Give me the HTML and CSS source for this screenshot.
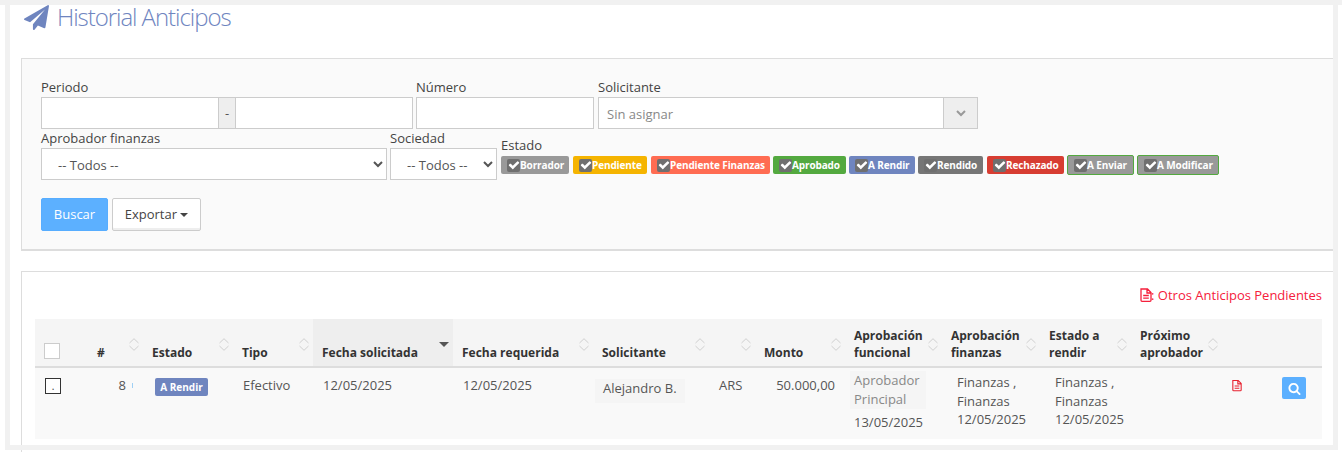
FILE: index.html
```html
<!DOCTYPE html>
<html lang="es">
<head>
<meta charset="utf-8">
<title>Historial Anticipos</title>
<link rel="stylesheet" href="styles.css">
</head>
<body>
<svg class="defs" width="0" height="0" aria-hidden="true">
  <symbol id="check" viewBox="0 0 1792 1792"><path fill="#fff" d="M1671 566q0 40-28 68l-724 724-136 136q-28 28-68 28t-68-28l-136-136-362-362q-28-28-28-68t28-68l136-136q28-28 68-28t68 28l294 295 656-657q28-28 68-28t68 28l136 136q28 28 28 68z"/></symbol>
  <symbol id="sort" viewBox="0 0 10 13"><path fill="none" stroke="#d0d0d0" d="M.5 5 5 .7 9.500 5M.5 8 5 12.300 9.500 8"/></symbol>
  <symbol id="doc" viewBox="0 0 12 14"><path fill="none" stroke="currentColor" stroke-width="1.300" d="M1 1h6.500L11 4.500V12.300a1 1 0 0 1-1 1H2a1 1 0 0 1-1-1zM7 1v4h4M3.200 7.500h5.600M3.200 10.200h5.600"/></symbol>
</svg>
<div class="topbar"></div>
<div class="page">
  <main class="inner">
    <h1 class="title">
      <svg class="plane" viewBox="0 0 1792 1792"><path fill="#6f85bf" d="M1764 11q33 24 27 64l-256 1536q-5 29-32 45-14 8-31 8-11 0-24-5l-453-185-242 295q-18 23-49 23-13 0-22-4-19-7-30.500-23.500t-11.500-36.500v-349l864-1059-1069 925-395-162q-37-14-40-55-2-40 32-59l1664-960q15-9 32-9 20 0 36 11z"/></svg>
      <span>Historial Anticipos</span>
    </h1>

    <section class="filters">
      <div class="row row-one">
        <div class="field f-periodo">
          <label>Periodo</label>
          <div class="group">
            <input class="ctl grow" type="text">
            <span class="addon">-</span>
            <input class="ctl grow" type="text">
          </div>
        </div>
        <div class="field f-numero">
          <label>Número</label>
          <input class="ctl" type="text">
        </div>
        <div class="field f-solic">
          <label>Solicitante</label>
          <div class="picker">
            <span class="picker-text">Sin asignar</span>
            <span class="picker-arrow"><svg width="10" height="7" viewBox="0 0 10 7"><path fill="none" stroke="#999" stroke-width="2" d="M1 1l4 4 4-4"/></svg></span>
          </div>
        </div>
      </div>
      <div class="row row-two">
        <div class="field f-aprob">
          <label>Aprobador finanzas</label>
          <select class="ctl sel"><option>-- Todos --</option></select>
        </div>
        <div class="field f-soc">
          <label>Sociedad</label>
          <select class="ctl sel"><option>-- Todos --</option></select>
        </div>
        <div class="field f-estado">
          <label class="lbl-estado">Estado</label>
          <div class="chips">
            <span class="chip c-borrador"><i class="box"><svg><use href="#check"/></svg></i>Borrador</span>
            <span class="chip c-pendiente"><i class="box"><svg><use href="#check"/></svg></i>Pendiente</span>
            <span class="chip c-finanzas"><i class="box"><svg><use href="#check"/></svg></i>Pendiente Finanzas</span>
            <span class="chip c-aprobado"><i class="box"><svg><use href="#check"/></svg></i>Aprobado</span>
            <span class="chip c-rendir"><i class="box"><svg><use href="#check"/></svg></i>A Rendir</span>
            <span class="chip c-rendido"><i class="box"><svg><use href="#check"/></svg></i>Rendido</span>
            <span class="chip c-rechazado"><i class="box"><svg><use href="#check"/></svg></i>Rechazado</span>
            <span class="chip c-enviar"><i class="box"><svg><use href="#check"/></svg></i>A Enviar</span>
            <span class="chip c-modificar"><i class="box"><svg><use href="#check"/></svg></i>A Modificar</span>
          </div>
        </div>
      </div>
      <div class="actions">
        <button class="btn btn-primary" type="button">Buscar</button>
        <button class="btn btn-default" type="button">Exportar <i class="caret"></i></button>
      </div>
    </section>

    <section class="results">
      <div class="toolbar">
        <a class="pending"><svg class="doc-link"><use href="#doc"/></svg>: Otros Anticipos Pendientes</a>
      </div>
      <table class="grid">
        <colgroup>
          <col class="w-check"><col class="w-num"><col class="w-estado"><col class="w-tipo"><col class="w-fecha"><col class="w-fecha"><col class="w-solic"><col class="w-mon"><col class="w-monto"><col class="w-func"><col class="w-fin"><col class="w-rend"><col class="w-prox"><col class="w-doc"><col class="w-act">
        </colgroup>
        <thead>
          <tr>
            <th><span class="head-check"></span></th>
            <th class="sortable">#<svg class="sort"><use href="#sort"/></svg></th>
            <th class="sortable">Estado<svg class="sort"><use href="#sort"/></svg></th>
            <th class="sortable">Tipo<svg class="sort"><use href="#sort"/></svg></th>
            <th class="sorted">Fecha solicitada<i class="sort-down"></i></th>
            <th class="sortable">Fecha requerida<svg class="sort"><use href="#sort"/></svg></th>
            <th class="sortable">Solicitante<svg class="sort"><use href="#sort"/></svg></th>
            <th class="sortable"><svg class="sort"><use href="#sort"/></svg></th>
            <th class="sortable">Monto<svg class="sort"><use href="#sort"/></svg></th>
            <th class="sortable">Aprobación funcional<svg class="sort"><use href="#sort"/></svg></th>
            <th class="sortable">Aprobación finanzas<svg class="sort"><use href="#sort"/></svg></th>
            <th class="sortable">Estado a rendir<svg class="sort"><use href="#sort"/></svg></th>
            <th class="sortable">Próximo aprobador<svg class="sort"><use href="#sort"/></svg></th>
            <th></th>
            <th></th>
          </tr>
        </thead>
        <tbody>
          <tr>
            <td><span class="row-check">.</span></td>
            <td class="num">8<i class="tick"></i></td>
            <td class="center"><span class="badge">A Rendir</span></td>
            <td>Efectivo</td>
            <td>12/05/2025</td>
            <td>12/05/2025</td>
            <td class="tight"><span class="person">Alejandro B.</span></td>
            <td>ARS</td>
            <td class="amount">50.000,00</td>
            <td class="func"><span class="role">Aprobador Principal</span><span class="date">13/05/2025</span></td>
            <td class="approv">Finanzas , Finanzas<br>12/05/2025</td>
            <td class="approv">Finanzas , Finanzas<br>12/05/2025</td>
            <td></td>
            <td class="doc-cell"><svg class="doc-row"><use href="#doc"/></svg></td>
            <td class="act-cell"><button class="search" type="button"><svg viewBox="0 0 1792 1792"><path fill="#fff" d="M1216 832q0-185-131.500-316.500t-316.500-131.500-316.500 131.500-131.500 316.500 131.500 316.500 316.500 131.500 316.500-131.500 131.500-316.500zm512 832q0 52-38 90t-90 38q-54 0-90-38l-343-342q-179 124-399 124-143 0-273.500-55.500t-225-150-150-225-55.500-273.500 55.500-273.500 150-225 225-150 273.500-55.500 273.500 55.500 225 150 150 225 55.500 273.500q0 220-124 399l343 343q37 37 37 90z"/></svg></button></td>
          </tr>
        </tbody>
      </table>
    </section>
  </main>
</div>
<div class="tail"></div>
</body>
</html>
```
FILE: styles.css
```css
* { box-sizing: border-box; }
html, body { margin: 0; padding: 0; background: #fff; overflow: hidden; }
body { height: 452px; font-family: "Open Sans", sans-serif; font-size: 13px; color: #555; }
.defs { display: block; height: 0; }

.topbar { height: 5px; background: #f1f1f1; }
.page { width: 1333px; margin-left: 5px; height: 445px; padding: 0 5px 5px 5px; background: #f1f1f1; }
.inner { height: 440px; background: #fff; padding-left: 11px; }
.tail { height: 2px; margin-left: 21px; width: 1px; background: #ddd; }

.title { display: flex; align-items: center; height: 53px; margin: 0; padding: 0 0 30px 3px; font-size: 24px; line-height: 23px; font-weight: 300; color: #6f85bf; letter-spacing: -1.050px; }
.plane { width: 25px; height: 25px; margin-right: 8px; margin-top: 2px; flex: none; }

.filters { height: 193px; background: #fafafa; border: 1px solid #ddd; border-right: 0; border-bottom-width: 2px; padding: 18px 0 0 19px; }
.row { display: flex; align-items: flex-end; }
.row-one { height: 52px; gap: 3px; }
.row-two { height: 51px; gap: 3px; margin-top: 0; }
.field { display: flex; flex-direction: column; }
label { font-size: 13px; line-height: 20px; color: #444; }
.ctl { height: 32px; border: 1px solid #ccc; background: #fff; font-family: inherit; font-size: 13px; color: #555; border-radius: 0; outline: 0; padding: 0 12px; width: 100%; }
.sel { padding: 2px 0 0 12px; }
.group { display: flex; }
.grow { flex: 1; width: 0; }
.addon { width: 18px; background: #eee; border: 1px solid #ccc; border-width: 1px; display: flex; align-items: center; justify-content: center; color: #555; font-size: 13px; margin: 0 -1px; position: relative; }
.f-periodo { width: 372px; }
.f-numero { width: 178px; }
.f-solic { width: 380px; margin-left: 1px; }
.picker { display: flex; height: 32px; border: 1px solid #ccc; background: #fff; }
.picker-text { flex: 1; padding-left: 8px; line-height: 32px; color: #888; }
.picker-arrow { width: 34px; background: #eee; border-left: 1px solid #ccc; display: flex; align-items: center; justify-content: center; }

.f-aprob { width: 346px; }
.f-soc { width: 107px; }
.f-soc label { line-height: 20px; }
.f-estado { margin-left: 1px; margin-bottom: 5px; }
.lbl-estado { line-height: 18px; margin-bottom: 1px; }
.chips { display: flex; gap: 3px; align-items: center; height: 20px; }
.chip { display: inline-flex; align-items: center; height: 18px; padding: 0 0 0 6px; border-radius: 2px; color: #fff; font-size: 10px; font-weight: 700; letter-spacing: -.12px; white-space: nowrap; }
.box { flex: none; width: 13px; height: 13px; margin-right: 0; background: #6f6f6f; border-radius: 2px; display: flex; align-items: center; justify-content: center; }
.box svg { width: 12px; height: 12px; display: block; flex: none; margin-left: 1px; }
.c-borrador { background: #999; width: 68px; }
.c-pendiente { background: #f5b400; width: 74px; margin-left: 1px; }
.c-finanzas { background: #ff6c52; width: 119px; margin-left: 1px; }
.c-aprobado { background: #53a93f; width: 73px; }
.c-rendir { background: #6f85bf; width: 66px; }
.c-rendido { background: #767676; width: 65px; }
.c-rechazado { background: #d73d32; width: 77px; margin-left: 1px; }
.c-enviar { background: #999; width: 67px; height: 20px; border: 1px solid #53a93f; }
.c-modificar { background: #999; width: 82px; height: 20px; border: 1px solid #53a93f; }

.actions { display: flex; gap: 4px; margin-top: 18px; }
.btn { height: 33px; font-family: inherit; font-size: 13px; border-radius: 2px; padding: 0 0 2px; }
.btn-primary { width: 67px; background: #5cb0ff; border: 1px solid #57adff; color: #fff; }
.btn-default { width: 89px; background: #fff; border: 1px solid #ccc; color: #444; box-shadow: inset 0 -2px 0 #eee; }
.caret { display: inline-block; border-top: 4px solid #444; border-left: 4px solid transparent; border-right: 4px solid transparent; vertical-align: middle; }

.results { margin-top: 20px; background: #fff; border: 1px solid #ddd; border-right: 0; border-bottom: 0; padding: 0 0 0 13px; height: 174px; }
.toolbar { height: 47px; display: flex; justify-content: flex-end; align-items: flex-start; padding: 14px 11px 0 0; }
.pending { color: #f5203c; font-size: 13px; line-height: 18px; display: flex; align-items: center; }
.doc-link { width: 12px; height: 14px; margin-right: -1px; color: #f5203c; }

.grid { border-collapse: collapse; table-layout: fixed; width: 1287px; color: #555; }
.w-check { width: 53px; } .w-num { width: 55px; } .w-estado { width: 90px; } .w-tipo { width: 80px; }
.w-fecha { width: 140px; } .w-solic { width: 116px; } .w-mon { width: 46px; } .w-monto { width: 90px; }
.w-func { width: 97px; } .w-fin { width: 98px; } .w-rend { width: 91px; } .w-prox { width: 91px; }
.w-doc { width: 50px; } .w-act { width: 50px; }

th { position: relative; height: 48px; padding: 0 9px 5px; text-align: left; vertical-align: bottom; background: #f5f5f5; border-bottom: 2px solid #ddd; font-size: 12px; line-height: 17px; font-weight: 700; color: #333; }
th.sorted { background: #eee; }
.sort { position: absolute; right: 4px; top: 19px; width: 10px; height: 13px; }
.sort-down { position: absolute; right: 4px; top: 23px; border-top: 5px solid #555; border-left: 5.500px solid transparent; border-right: 5.500px solid transparent; }
.head-check { display: block; width: 16px; height: 16px; border: 1px solid #ccc; background: #fff; margin-bottom: 2px; }

td { background: #f9f9f9; height: 72px; vertical-align: top; padding: 8px 10px 0; line-height: 18px; }
.row-check { display: block; width: 16px; height: 16px; border: 1px solid #333; background: #fff; margin-top: 2px; font-size: 10px; line-height: 15px; text-align: center; color: #333; }
td:first-child { padding-left: 10px; }
.num { text-align: right; padding-right: 17px; position: relative; }
.tick { position: absolute; right: 10px; top: 15px; width: 1px; height: 5px; background: #9fd0f5; }
.center { padding-left: 12px; }
.badge { display: block; width: 53px; height: 18px; margin-top: 2px; background: #6f85bf; color: #fff; border-radius: 2px; font-size: 10px; font-weight: 700; line-height: 18px; text-align: center; }
.tight { padding-left: 2px; }
.person { display: inline-block; height: 24px; padding: 0 8px; margin-top: 3px; line-height: 18px; background: #f5f5f5; white-space: nowrap; }
.amount { text-align: right; padding-right: 10px; padding-left: 0; }
.func { padding: 3px 5px 0 5px; }
.role { display: block; width: 76px; height: 38px; padding: 0 4px; background: #f5f5f5; color: #888; line-height: 19px; }
.date { display: block; padding-left: 4px; margin-top: 2px; line-height: 22px; }
.approv { padding: 5px 10px 0 15px; line-height: 18.500px; }
.doc-cell { padding: 11px 0 0 10px; }
.doc-row { width: 10px; height: 13px; color: #e8212f; display: block; }
.act-cell { padding: 9px 0 0 10px; }
.search { display: flex; align-items: center; justify-content: center; width: 24px; height: 22px; padding: 0; border: 0; border-radius: 2px; background: #5cb0ff; }
.search svg { width: 13px; height: 13px; }
```
